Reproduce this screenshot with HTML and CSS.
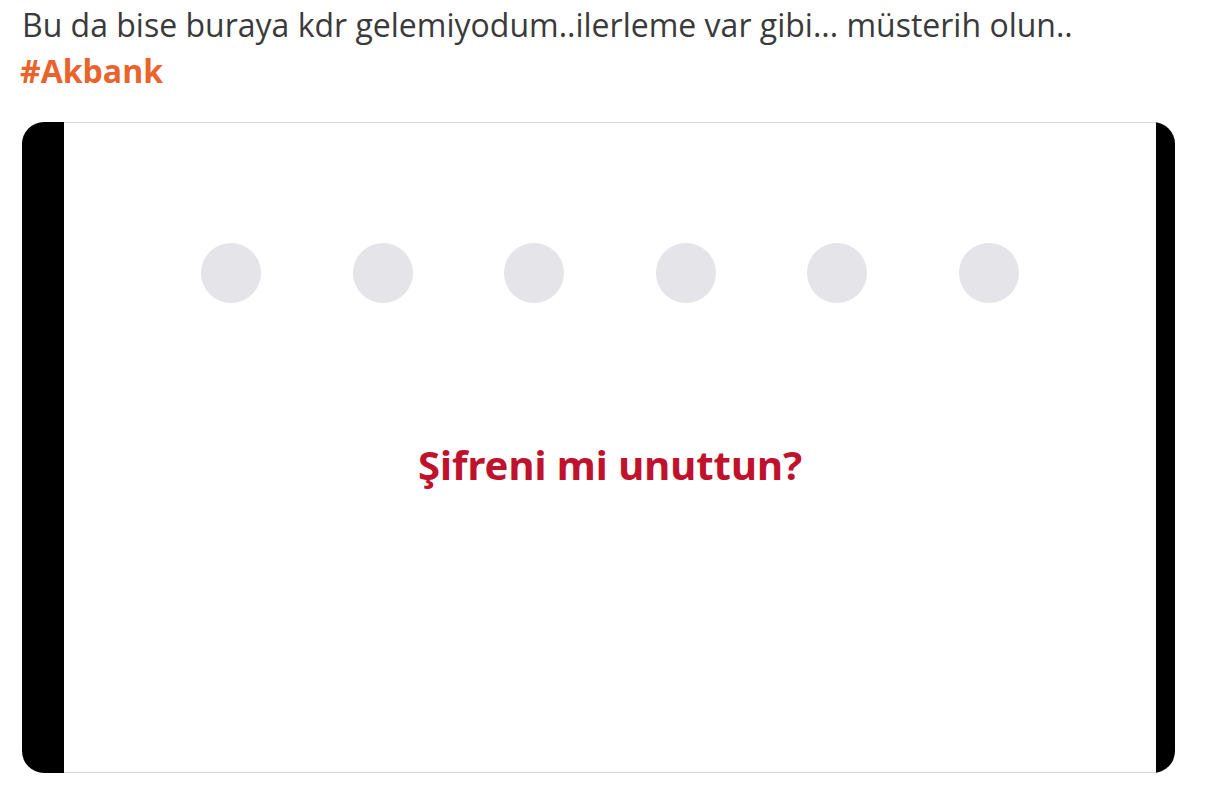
FILE: index.html
```html
<html lang="tr">
    <head>
        <title>Akbank</title>
        <link rel="stylesheet" href="styles.css">
    </head>
    <body>
        <div class="tweet-text">
            <p class="line">Bu da bise buraya kdr gelemiyodum..ilerleme var gibi... müsterih olun..</p>
            <p class="tag">#Akbank</p>
        </div>
        <div class="media">
            <div class="edge edge-left"></div>
            <div class="screen">
                <div class="pin-dots">
                    <div class="dot"></div>
                    <div class="dot"></div>
                    <div class="dot"></div>
                    <div class="dot"></div>
                    <div class="dot"></div>
                    <div class="dot"></div>
                </div>
                <div class="forgot">Şifreni mi unuttun?</div>
            </div>
            <div class="edge edge-right"></div>
        </div>
    </body>
</html>
```

FILE: styles.css
```css
body {
    margin: 0;
    padding: 0 0 0 22px;
    background-color: white;
    font-family: "Open Sans", "Noto Sans", sans-serif;
    width: 1207px;
    height: 800px;
    box-sizing: border-box;
    overflow: hidden;
}

.tweet-text {
    padding-top: 2px;
}

.line {
    margin: 0;
    font-size: 32px;
    line-height: 46px;
    color: #3a3a3a;
    white-space: nowrap;
}

.tag {
    margin: 0;
    margin-left: -2px;
    font-size: 32px;
    line-height: 46px;
    font-weight: bold;
    color: #e8642c;
}

.media {
    display: flex;
    width: 1153px;
    height: 651px;
    margin-top: 28px;
    border-radius: 22px;
    overflow: hidden;
}

.edge {
    background-color: black;
}

.edge-left {
    width: 42px;
}

.edge-right {
    width: 19px;
}

.screen {
    flex: 1;
    background-color: white;
    border-top: 1px solid #d8d8d8;
    border-bottom: 1px solid #d8d8d8;
    display: flex;
    flex-direction: column;
    align-items: center;
    padding-top: 120px;
}

.pin-dots {
    display: flex;
    gap: 91.6px;
}

.dot {
    width: 60px;
    height: 60px;
    border-radius: 50%;
    background-color: #e4e4e9;
}

.forgot {
    margin-top: 134px;
    font-family: "Noto Sans", sans-serif;
    font-weight: bold;
    font-size: 40px;
    color: #c0122c;
}
```
